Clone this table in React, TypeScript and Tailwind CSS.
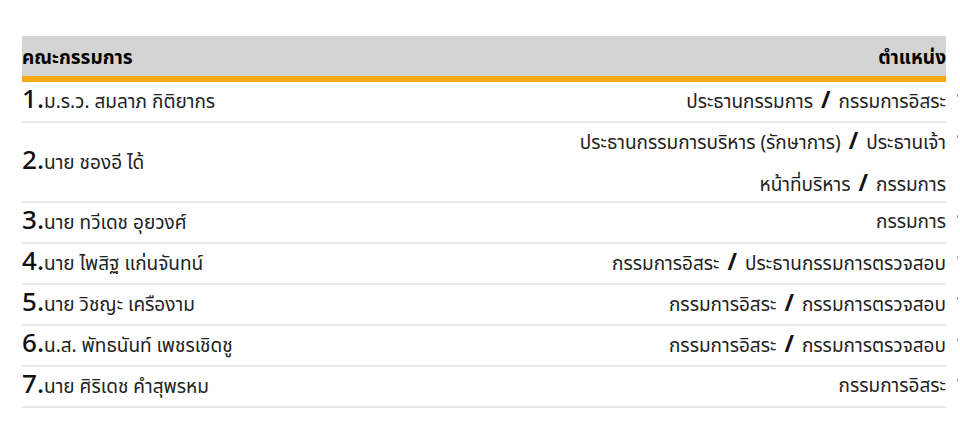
const board = [
  { no: '1', name: 'ม.ร.ว. สมลาภ กิติยากร', pos: ['ประธานกรรมการ', 'กรรมการอิสระ'] },
  { no: '2', name: 'นาย ชองอี ได้', pos: ['ประธานกรรมการบริหาร (รักษาการ)', 'ประธานเจ้า|หน้าที่บริหาร', 'กรรมการ'] },
  { no: '3', name: 'นาย ทวีเดช อุยวงศ์', pos: ['กรรมการ'] },
  { no: '4', name: 'นาย ไพสิฐ แก่นจันทน์', pos: ['กรรมการอิสระ', 'ประธานกรรมการตรวจสอบ'] },
  { no: '5', name: 'นาย วิชญะ เครืองาม', pos: ['กรรมการอิสระ', 'กรรมการตรวจสอบ'] },
  { no: '6', name: 'น.ส. พัทธนันท์ เพชรเชิดชู', pos: ['กรรมการอิสระ', 'กรรมการตรวจสอบ'] },
  { no: '7', name: 'นาย ศิริเดช คำสุพรหม', pos: ['กรรมการอิสระ'] },
];

function Slash() {
  return <span className="mx-[8px] text-[23px] font-bold text-[#111]">/</span>;
}

function Position({ parts }: { parts: string[] }) {
  // row 2 wraps onto two lines in the original
  if (parts.length === 3) {
    return (
      <div className="text-right">
        <div className="h-[42px]">
          {parts[0]}
          <Slash />
          ประธานเจ้า
        </div>
        <div className="h-[36px]">
          หน้าที่บริหาร
          <Slash />
          {parts[2]}
        </div>
      </div>
    );
  }
  return (
    <div className="text-right">
      {parts.map((p, i) => (
        <span key={p + i}>
          {i > 0 && <Slash />}
          {p}
        </span>
      ))}
    </div>
  );
}

export default function App() {
  return (
    <div
      className="h-[432px] w-[960px] bg-white pt-[36px] pl-[22px]"
      style={{ fontFamily: 'Tahoma, "Noto Sans Thai", "Noto Sans", "DejaVu Sans", sans-serif' }}
    >
      <div className="relative w-[924px]">
        {/* header */}
        <div className="flex h-[40px] items-center justify-between bg-[#d4d4d4] pt-[6px] text-[19px] leading-[30px] font-bold text-black">
          <span>คณะกรรมการ</span>
          <span>ตำแหน่ง</span>
        </div>
        <div className="h-[6px] bg-[#f7a90f]" />

        {board.map((m) => (
          <div
            key={m.no}
            className={`relative flex items-center justify-between border-b-2 border-[#e8e8e8] text-[19px] leading-[39px] text-[#222] ${
              m.pos.length === 3 ? 'h-[80px]' : 'h-[41px]'
            }`}
          >
            <div className="flex items-baseline">
              <span className="text-[26px] font-medium text-[#111]">{m.no}.</span>
              <span>{m.name}</span>
            </div>
            <Position parts={m.pos} />
            <span className="absolute top-[12px] right-[-12px] h-[3px] w-[1px] bg-[#aaa]" />
          </div>
        ))}
      </div>
    </div>
  );
}
